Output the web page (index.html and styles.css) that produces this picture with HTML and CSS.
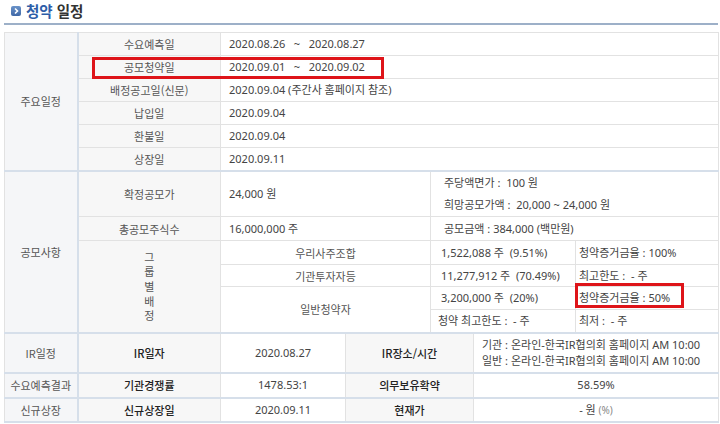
FILE: index.html
```html
<!DOCTYPE html>
<html lang="ko">
<head>
<meta charset="utf-8">
<link rel="stylesheet" href="styles.css">
</head>
<body>
<div class="page">
  <div class="head">
    <span class="ico"><svg width="10" height="10" viewBox="0 0 10 10"><path d="M4 2.5 L6.5 5 L4 7.5" fill="none" stroke="#fff" stroke-width="1.6"/></svg></span>
    <h2 class="title"><span class="blue">청약</span> 일정</h2>
  </div>
  <div class="wrap">
    <table class="sched">
      <colgroup>
        <col class="c1"><col class="c2"><col class="c3"><col class="c4"><col class="c5"><col class="c6"><col class="c7">
      </colgroup>
      <tbody>
        <tr class="r23 first">
          <td class="cat" rowspan="6">주요일정</td>
          <th class="lbl">수요예측일</th>
          <td class="val" colspan="5">2020.08.26 &nbsp;&nbsp;~ &nbsp;&nbsp;2020.08.27</td>
        </tr>
        <tr class="r23">
          <th class="lbl">공모청약일</th>
          <td class="val" colspan="5">2020.09.01 &nbsp;&nbsp;~ &nbsp;&nbsp;2020.09.02</td>
        </tr>
        <tr class="r23">
          <th class="lbl">배정공고일(신문)</th>
          <td class="val" colspan="5">2020.09.04 (주간사 홈페이지 참조)</td>
        </tr>
        <tr class="r23">
          <th class="lbl">납입일</th>
          <td class="val" colspan="5">2020.09.04</td>
        </tr>
        <tr class="r23">
          <th class="lbl">환불일</th>
          <td class="val" colspan="5">2020.09.04</td>
        </tr>
        <tr class="r23">
          <th class="lbl">상장일</th>
          <td class="val" colspan="5">2020.09.11</td>
        </tr>

        <tr class="r46 sec">
          <td class="cat" rowspan="6">공모사항</td>
          <th class="lbl">확정공모가</th>
          <td class="val" colspan="2">24,000 원</td>
          <td class="val wide" colspan="3">
            <div class="line">주당액면가 : &nbsp;100 원</div>
            <div class="line">희망공모가액 : &nbsp;20,000 ~ 24,000 원</div>
          </td>
        </tr>
        <tr class="r24">
          <th class="lbl">총공모주식수</th>
          <td class="val" colspan="2">16,000,000 주</td>
          <td class="val wide" colspan="3">공모금액 : 384,000 (백만원)</td>
        </tr>
        <tr class="r24">
          <th class="lbl vert" rowspan="4">그<br>룹<br>별<br>배<br>정</th>
          <td class="glbl" colspan="2">우리사주조합</td>
          <td class="val mid" colspan="2">1,522,088 주 &nbsp;(9.51%)</td>
          <td class="val tight">청약증거금율 : 100%</td>
        </tr>
        <tr class="r22">
          <td class="glbl" colspan="2">기관투자자등</td>
          <td class="val mid" colspan="2">11,277,912 주 &nbsp;(70.49%)</td>
          <td class="val tight">최고한도 : &nbsp;- 주</td>
        </tr>
        <tr class="r23">
          <td class="glbl" colspan="2" rowspan="2">일반청약자</td>
          <td class="val mid" colspan="2">3,200,000 주 &nbsp;(20%)</td>
          <td class="val tight">청약증거금율 : 50%</td>
        </tr>
        <tr class="r23">
          <td class="val low" colspan="2">청약 최고한도 : &nbsp;- 주</td>
          <td class="val tight">최저 : &nbsp;- 주</td>
        </tr>

        <tr class="r40 sec">
          <td class="cat">IR일정</td>
          <th class="lbl dark">IR일자</th>
          <td class="ctr">2020.08.27</td>
          <th class="lbl dark" colspan="2">IR장소/시간</th>
          <td class="val ir" colspan="2">
            <div class="irl">기관 : 온라인-한국IR협의회 홈페이지 AM 10:00</div>
            <div class="irl">일반 : 온라인-한국IR협의회 홈페이지 AM 10:00</div>
          </td>
        </tr>
        <tr class="r25 sec">
          <td class="cat">수요예측결과</td>
          <th class="lbl dark">기관경쟁률</th>
          <td class="ctr">1478.53:1</td>
          <th class="lbl dark" colspan="2">의무보유확약</th>
          <td class="ctr" colspan="2">58.59%</td>
        </tr>
        <tr class="r24 sec last">
          <td class="cat">신규상장</td>
          <th class="lbl dark">신규상장일</th>
          <td class="ctr">2020.09.11</td>
          <th class="lbl dark" colspan="2">현재가</th>
          <td class="ctr" colspan="2">- 원 <span class="pct">(%)</span></td>
        </tr>
      </tbody>
    </table>
    <div class="mark mark-a"></div>
    <div class="mark mark-b"></div>
  </div>
</div>
</body>
</html>
```

FILE: styles.css
```css
* { box-sizing: border-box; }
html, body { margin: 0; padding: 0; background: #fff; }
body {
  font-family: "Noto Sans", "Noto Sans CJK KR", sans-serif;
  font-size: 11px;
  color: #444;
}
.page { width: 720px; padding: 0 2px 0 4px; }

.head {
  display: flex;
  align-items: center;
  height: 25px;
  padding: 0 0 1px 7px;
  border-bottom: 2px solid #9db0c8;
}
.ico {
  display: flex;
  width: 10px;
  height: 10px;
  border-radius: 2px;
  background: linear-gradient(#6a93c9, #3f68a6);
  margin-right: 5px;
}
.title {
  margin: 0;
  font-size: 14.5px;
  font-weight: bold;
  color: #333;
  line-height: 18px;
  font-family: "Noto Sans CJK KR", sans-serif;
}
.blue { color: #2d5ea8; }

.wrap { position: relative; margin-top: 7px; }

.sched {
  border-collapse: collapse;
  table-layout: fixed;
  width: 714px;
  border: 1px solid #dedede;
}
.c1 { width: 73px; }
.c2 { width: 143px; }
.c3 { width: 125px; }
.c4 { width: 85px; }
.c5 { width: 43px; }
.c6 { width: 102px; }
.c7 { width: 143px; }

.sched td, .sched th {
  border: 1px solid #e2e2e2;
  padding: 0;
  font-weight: normal;
  line-height: 14px;
  vertical-align: middle;
}
.r22 { height: 22px; }
.r23 { height: 23px; }
.r24 { height: 24px; }
.r25 { height: 25px; }
.r40 { height: 40px; }
.r46 { height: 46px; }

.sec > td, .sec > th { border-top: 2px solid #d6dfea; }
.last > td, .last > th { border-bottom: 2px solid #d6dfea; }

.cat {
  background: #f5f6f8;
  text-align: center;
  color: #555;
  border-right: 2px solid #d6dfea !important;
  font-family: "Noto Sans CJK KR", sans-serif;
}
.lbl {
  background: #f7f7f7;
  text-align: center;
  color: #555;
  font-family: "Noto Sans CJK KR", sans-serif;
}
.lbl.dark { color: #222; font-weight: 500; }
.vert { line-height: 14.6px !important; }
.glbl { text-align: center; color: #555; font-family: "Noto Sans CJK KR", sans-serif; }
.val { padding-left: 8px !important; text-align: left; color: #444; }
.val.wide { padding-left: 13px !important; }
.val.mid { padding-left: 10px !important; }
.val.low { padding-left: 7px !important; }
.val.tight { padding-left: 3px !important; }
.line { line-height: 22px; }
.irl { line-height: 16px; color: #444; }
.ctr { text-align: center; color: #444; }
.pct { color: #888; font-size: 10px; }

.mark {
  position: absolute;
  border: 3px solid #de1419;
  pointer-events: none;
}
.mark-a { left: 88px; top: 25px; width: 292px; height: 22px; }
.mark-b { left: 571px; top: 251px; width: 109px; height: 25px; }
```
